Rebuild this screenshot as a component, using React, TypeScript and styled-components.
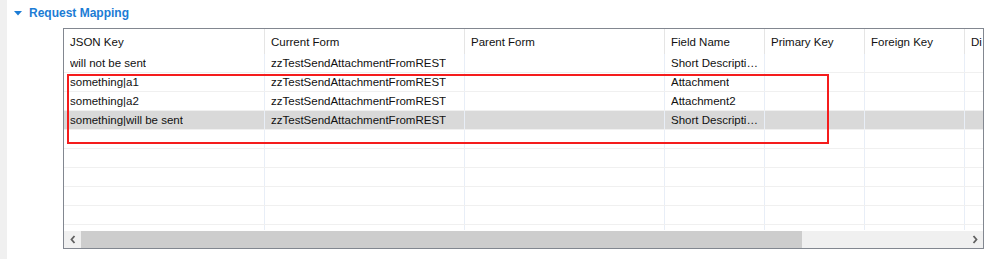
import React from 'react';
import styled, { createGlobalStyle } from 'styled-components';

const GlobalStyle = createGlobalStyle`
  html, body {
    margin: 0;
    padding: 0;
    background: #ffffff;
  }
  body {
    font-family: "Liberation Sans", Arial, sans-serif;
    font-size: 11.5px;
    color: #000000;
  }
`;

// last column is only partly in view, like in the real grid
const columns = [
  { key: 'json', label: 'JSON Key', width: 201 },
  { key: 'current', label: 'Current Form', width: 200 },
  { key: 'parent', label: 'Parent Form', width: 200 },
  { key: 'field', label: 'Field Name', width: 100 },
  { key: 'primary', label: 'Primary Key', width: 100 },
  { key: 'foreign', label: 'Foreign Key', width: 100 },
  { key: 'display', label: 'Di', width: 100 },
];

const gridTemplate = columns.map(c => `${c.width}px`).join(' ');

type Row = Record<string, string>;

const rows: Row[] = [
  { json: 'will not be sent', current: 'zzTestSendAttachmentFromREST', field: 'Short Description' },
  { json: 'something|a1', current: 'zzTestSendAttachmentFromREST', field: 'Attachment' },
  { json: 'something|a2', current: 'zzTestSendAttachmentFromREST', field: 'Attachment2' },
  { json: 'something|will be sent', current: 'zzTestSendAttachmentFromREST', field: 'Short Description' },
];

const EMPTY_ROWS = 6;
const SELECTED_ROW = 3;

const Page = styled.div`
  display: flex;
  width: 995px;
  height: 259px;
  overflow: hidden;
`;

const LeftRail = styled.div`
  width: 7px;
  flex: 0 0 7px;
  background: #f0f0f0;
`;

const Main = styled.div`
  flex: 1;
  display: flex;
  flex-direction: column;
`;

const SectionHeader = styled.div`
  height: 28px;
  display: flex;
  align-items: center;
  gap: 7px;
  padding-left: 7px;
  padding-bottom: 2px;
  box-sizing: border-box;
`;

const SectionTitle = styled.span`
  font-weight: bold;
  font-size: 12px;
  color: #1c7cd5;
`;

const TableFrame = styled.div`
  position: relative;
  margin-left: 56px;
  width: 921px;
  height: 221px;
  box-sizing: border-box;
  border: 1px solid #828790;
  display: flex;
  flex-direction: column;
  overflow: hidden;
`;

const HeaderRow = styled.div`
  display: grid;
  grid-template-columns: ${gridTemplate};
  height: 25px;
  flex: 0 0 25px;
`;

const HeaderCell = styled.div`
  display: flex;
  align-items: center;
  padding-left: 6px;
  border-right: 1px solid #e5e5e5;
  white-space: nowrap;
  overflow: hidden;
  color: #111111;
`;

const Body = styled.div`
  height: 176px;
  flex: 0 0 176px;
  overflow: hidden;
`;

const BodyRow = styled.div<{ $selected?: boolean }>`
  display: grid;
  grid-template-columns: ${gridTemplate};
  height: 19px;
  box-sizing: border-box;
  border-bottom: 1px solid #f0f0f0;
  background: ${p => (p.$selected ? '#d9d9d9' : 'transparent')};
`;

const Cell = styled.div`
  display: flex;
  align-items: center;
  padding: 0 6px;
  border-right: 1px solid #e8eef7;
  min-width: 0;
  overflow: hidden;
  color: #111111;

  span {
    overflow: hidden;
    text-overflow: ellipsis;
    white-space: nowrap;
  }
`;

const ScrollBar = styled.div`
  margin-top: 1px;
  height: 17px;
  flex: 0 0 17px;
  display: flex;
  background: #f0f0f0;
`;

const ScrollButton = styled.div`
  width: 17px;
  flex: 0 0 17px;
  display: flex;
  align-items: center;
  justify-content: center;
`;

const Track = styled.div`
  flex: 1;
  display: flex;
`;

const Thumb = styled.div<{ $width: number }>`
  width: ${p => p.$width}px;
  background: #cdcdcd;
`;

// red highlight drawn over the grid in the screenshot
const Annotation = styled.div`
  position: absolute;
  left: 3px;
  top: 45px;
  width: 762px;
  height: 70px;
  box-sizing: border-box;
  border: 2px solid #f51c1c;
  pointer-events: none;
`;

const Chevron: React.FC<{ dir: 'left' | 'right' }> = ({ dir }) => (
  <svg width="6" height="9" viewBox="0 0 6 9">
    <path
      d={dir === 'left' ? 'M4.5 1 L1.5 4.5 L4.5 8' : 'M1.5 1 L4.5 4.5 L1.5 8'}
      fill="none"
      stroke="#606060"
      strokeWidth="1.8"
    />
  </svg>
);

const App: React.FC = () => {
  const emptyRows: Row[] = Array.from({ length: EMPTY_ROWS }, () => ({}));

  return (
    <>
      <GlobalStyle />
      <Page>
        <LeftRail />
        <Main>
          <SectionHeader>
            <svg width="8" height="5" viewBox="0 0 8 5">
              <path d="M0 0 L8 0 L4 4.5 Z" fill="#1c7cd5" />
            </svg>
            <SectionTitle>Request Mapping</SectionTitle>
          </SectionHeader>

          <TableFrame>
            <HeaderRow>
              {columns.map(c => (
                <HeaderCell key={c.key}>{c.label}</HeaderCell>
              ))}
            </HeaderRow>

            <Body>
              {[...rows, ...emptyRows].map((row, i) => (
                <BodyRow key={i} $selected={i === SELECTED_ROW}>
                  {columns.map(c => (
                    <Cell key={c.key}>
                      <span>{row[c.key] || ''}</span>
                    </Cell>
                  ))}
                </BodyRow>
              ))}
            </Body>

            <ScrollBar>
              <ScrollButton>
                <Chevron dir="left" />
              </ScrollButton>
              <Track>
                <Thumb $width={721} />
              </Track>
              <ScrollButton>
                <Chevron dir="right" />
              </ScrollButton>
            </ScrollBar>

            <Annotation />
          </TableFrame>
        </Main>
      </Page>
    </>
  );
};

export default App;
